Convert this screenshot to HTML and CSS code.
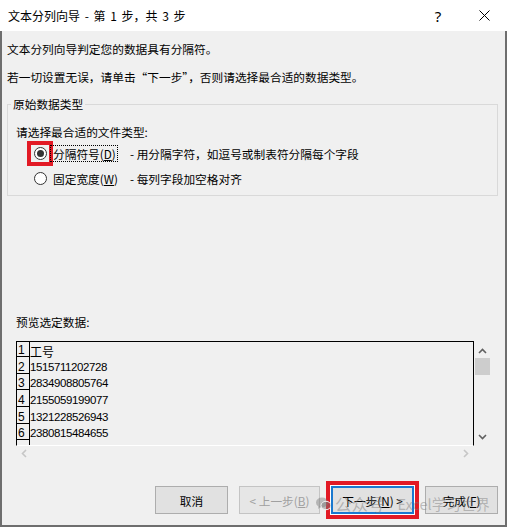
FILE: index.html
```html
<!DOCTYPE html>
<html lang="zh-CN">
<head>
    <meta charset="UTF-8">
    <title>文本分列向导 - 第 1 步，共 3 步</title>
    <link rel="stylesheet" href="styles.css">
</head>
<body>
    <div class="window">
        <div class="titlebar">
            <span class="title">文本分列向导 - 第 1 步，共 3 步</span>
            <span class="caption-btn help">?</span>
            <span class="caption-btn">
                <svg width="11" height="11" viewBox="0 0 11 11"><path d="M0.5 0.5 L10.5 10.5 M10.5 0.5 L0.5 10.5" stroke="#000" stroke-width="1" fill="none"/></svg>
            </span>
        </div>

        <div class="content">
            <p class="intro">文本分列向导判定您的数据具有分隔符。</p>
            <p class="intro second">若一切设置无误，请单击“下一步”，否则请选择最合适的数据类型。</p>

            <fieldset class="group">
                <legend>原始数据类型</legend>
                <div class="prompt">请选择最合适的文件类型:</div>
                <div class="options">
                    <span class="mark hl"><span class="radio checked"></span></span>
                    <span class="opt-label"><span class="focus">分隔符号(<u>D</u>)</span></span>
                    <span class="opt-desc">- 用分隔字符，如逗号或制表符分隔每个字段</span>

                    <span class="mark"><span class="radio"></span></span>
                    <span class="opt-label">固定宽度(<u>W</u>)</span>
                    <span class="opt-desc">- 每列字段加空格对齐</span>
                </div>
            </fieldset>

            <div class="preview-label">预览选定数据:</div>
            <div class="preview">
                <div class="data">
                    <div class="rows">
                        <div class="row"><span class="num">1</span><span class="cell cjk">工号</span></div>
                        <div class="row"><span class="num">2</span><span class="cell">1515711202728</span></div>
                        <div class="row"><span class="num">3</span><span class="cell">2834908805764</span></div>
                        <div class="row"><span class="num">4</span><span class="cell">2155059199077</span></div>
                        <div class="row"><span class="num">5</span><span class="cell">1321228526943</span></div>
                        <div class="row"><span class="num">6</span><span class="cell">2380815484655</span></div>
                        <div class="row"><span class="num"></span><span class="cell"></span></div>
                    </div>
                </div>
                <div class="vscroll">
                    <svg class="arrow" width="9" height="6" viewBox="0 0 9 6"><polyline points="1,5 4.5,1.5 8,5" fill="none" stroke="#606060" stroke-width="1.6"/></svg>
                    <div class="thumb"></div>
                    <svg class="arrow down" width="9" height="6" viewBox="0 0 9 6"><polyline points="1,1 4.5,4.5 8,1" fill="none" stroke="#606060" stroke-width="1.6"/></svg>
                </div>
                <div class="hscroll">
                    <svg width="6" height="9" viewBox="0 0 6 9"><polyline points="5,1 1.5,4.5 5,8" fill="none" stroke="#c6c6c6" stroke-width="1.6"/></svg>
                    <svg width="6" height="9" viewBox="0 0 6 9"><polyline points="1,1 4.5,4.5 1,8" fill="none" stroke="#c6c6c6" stroke-width="1.6"/></svg>
                </div>
            </div>

            <div class="buttons">
                <button class="btn cancel">取消</button>
                <button class="btn prev" disabled>&lt; 上一步(<u>B</u>)</button>
                <span class="hl-btn"><button class="btn next">下一步(<u>N</u>) &gt;</button></span>
                <button class="btn finish">完成(<u>F</u>)</button>
            </div>
        </div>

        <div class="watermark">
            <svg width="15" height="14" viewBox="0 0 15 14">
                <ellipse cx="6" cy="5.5" rx="6" ry="5" fill="currentColor"/>
                <path d="M2.5 9 L2 12 L5 10 Z" fill="currentColor"/>
                <ellipse cx="10" cy="8.5" rx="5" ry="4.2" fill="currentColor" stroke="#f0f0f0" stroke-width="1"/>
            </svg>
            <span class="wm-a">公众号</span>
            <span class="wm-b">Excel学习世界</span>
        </div>
    </div>
</body>
</html>
```

FILE: styles.css
```css
* {
    box-sizing: border-box;
}
body {
    margin: 0;
    background: #fff;
    font-family: "Noto Sans CJK SC", "Noto Sans", sans-serif;
    font-size: 11.7px;
    color: #000;
}
.window {
    width: 507px;
    height: 527px;
    display: flex;
    flex-direction: column;
    position: relative;
}
.titlebar {
    height: 31px;
    background: #fff;
    display: flex;
    align-items: center;
    flex-shrink: 0;
}
.title {
    padding-left: 8px;
    font-size: 12px;
    line-height: 16px;
    word-spacing: 2px;
}
.caption-btn {
    width: 46px;
    height: 31px;
    display: flex;
    align-items: center;
    justify-content: center;
}
.help {
    margin-left: auto;
    font-family: "Noto Sans", sans-serif;
    font-size: 15px;
}
.content {
    flex: 1;
    background: #f0f0f0;
    border: 2px solid #6e6e6e;
    border-top: none;
    padding: 0 7px 0 5px;
}
.intro {
    margin: 10px 0 0;
    line-height: 16px;
}
.intro.second {
    margin-top: 12px;
}
.group {
    margin: 11px 0 0;
    padding: 12px 8px 4px 8px;
    border: 1px solid #d9d9d9;
    min-width: 0;
}
.group legend {
    margin-left: -5px;
    padding: 0 2px;
    line-height: 16px;
}
.prompt {
    line-height: 16px;
}
.options {
    display: grid;
    grid-template-columns: 26px 77px auto;
    grid-auto-rows: 25px;
    align-items: center;
    margin: 1px 0 0 11px;
    line-height: 16px;
}
.mark {
    height: 25px;
    display: flex;
    align-items: center;
    justify-content: center;
}
.mark.hl {
    border: 4px solid #e21a25;
}
.radio {
    width: 13px;
    height: 13px;
    border: 1px solid #333;
    border-radius: 50%;
    background: #fff;
    display: flex;
    align-items: center;
    justify-content: center;
}
.radio.checked::after {
    content: "";
    width: 7px;
    height: 7px;
    border-radius: 50%;
    background: #333;
}
.opt-label {
    white-space: nowrap;
}
.focus {
    display: inline-block;
    margin-left: -3px;
    padding: 0 1px 0 2px;
    border: 1px dotted #000;
    line-height: 15px;
}
.opt-desc {
    white-space: nowrap;
}
.preview-label {
    margin: 118px 0 0 9px;
    line-height: 16px;
}
.preview {
    margin: 11px 0 0 9px;
    width: 475px;
    display: grid;
    grid-template-columns: 458px 17px;
    grid-template-rows: 105px 14px;
}
.data {
    border: 1px solid #000;
    border-bottom-color: #fff;
    overflow: hidden;
}
.rows {
    margin-top: -1.5px;
}
.row {
    display: flex;
    height: 16.67px;
}
.num {
    width: 13px;
    flex-shrink: 0;
    border-right: 1px solid #000;
    border-bottom: 1px solid #000;
    font-family: "Liberation Sans", sans-serif;
    font-size: 12px;
    line-height: 11px;
    padding-left: 1px;
    display: flex;
    align-items: flex-end;
}
.cell {
    font-family: "Liberation Sans", sans-serif;
    font-size: 11.5px;
    letter-spacing: -0.4px;
    line-height: 11px;
    display: flex;
    align-items: flex-end;
    padding-bottom: 1px;
}
.cell.cjk {
    font-family: "Noto Sans CJK SC", sans-serif;
    font-size: 12px;
    letter-spacing: 0;
    padding-bottom: 0;
}
.vscroll {
    display: flex;
    flex-direction: column;
    align-items: center;
    padding-top: 7px;
}
.thumb {
    width: 15px;
    height: 17px;
    margin-top: 4px;
    background: #cdcdcd;
}
.arrow.down {
    margin-top: auto;
    margin-bottom: 6px;
}
.hscroll {
    display: flex;
    justify-content: space-between;
    align-items: center;
    padding: 0 5px 0 5px;
}
.buttons {
    margin-top: 26px;
    display: flex;
    justify-content: flex-end;
    align-items: center;
}
.btn {
    height: 28px;
    border: 1px solid #adadad;
    background: #e1e1e1;
    font-family: "Noto Sans CJK SC", sans-serif;
    font-size: 11.7px;
    color: #000;
    padding: 0;
}
.cancel {
    width: 73px;
    margin-right: 11px;
}
.prev {
    width: 81px;
    margin-right: 6px;
    color: #a0a0a0;
    border-color: #c4c4c4;
    background: #e6e6e6;
}
.hl-btn {
    display: inline-flex;
    margin: -5px 6px -5px 0;
    border: 4px solid #e21a25;
    padding: 1px;
    background: #fff;
}
.next {
    width: 83px;
    border: 2px solid #1a79cf;
}
.finish {
    width: 73px;
}
.watermark {
    position: absolute;
    left: 316px;
    top: 494px;
    display: flex;
    align-items: center;
    color: rgba(120, 120, 120, 0.45);
    pointer-events: none;
}
.wm-a {
    margin-left: 4px;
    font-size: 16.5px;
    line-height: 20px;
}
.wm-b {
    margin-left: 13px;
    font-size: 14.5px;
    line-height: 20px;
}
```
